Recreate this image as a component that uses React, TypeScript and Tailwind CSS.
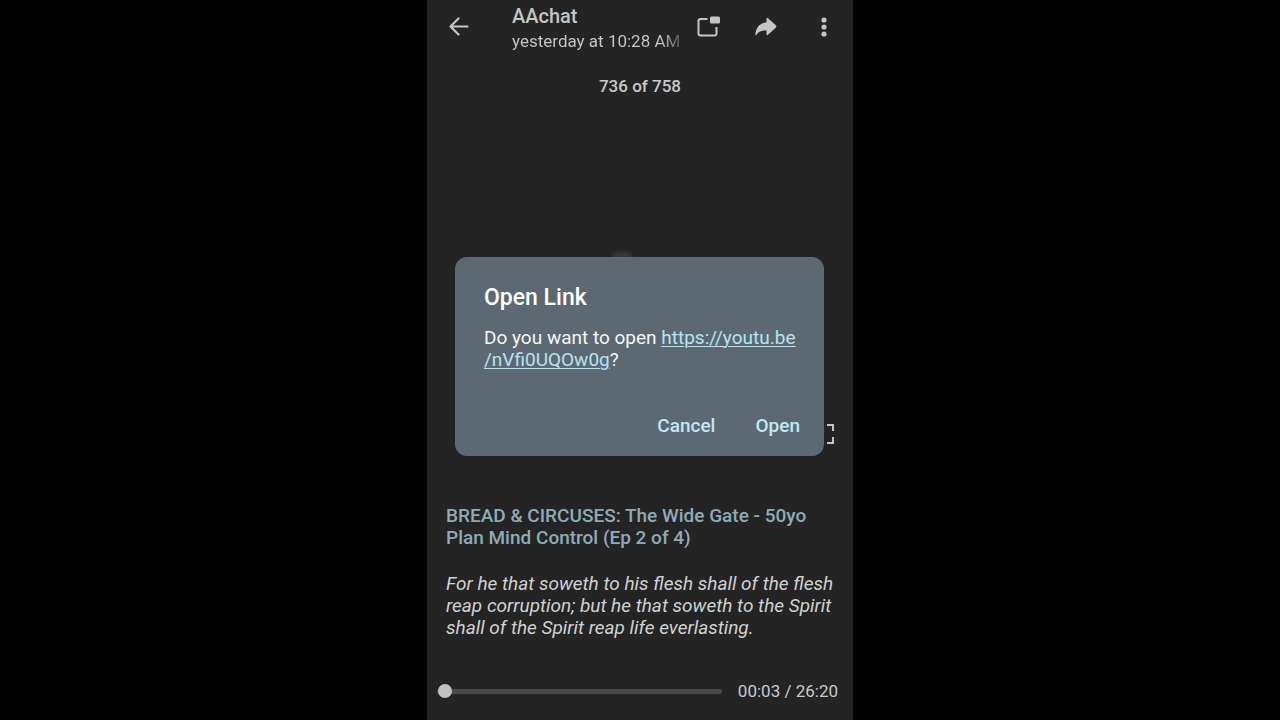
import React, { useState } from "react";

const iconButton = "flex items-center justify-center text-[#c4c6c5]";

function formatTime(seconds: number) {
  const m = String(Math.floor(seconds / 60)).padStart(2, "0");
  const s = String(seconds % 60).padStart(2, "0");
  return `${m}:${s}`;
}

function Header() {
  return (
    <header className="flex items-start pt-1 pr-[13px] pl-4">
      <button type="button" aria-label="Back" className={`${iconButton} h-[46px] w-8 shrink-0`}>
        <svg width="20" height="20" viewBox="0 0 20 20" fill="none" stroke="currentColor" strokeWidth="2.200" strokeLinecap="round" strokeLinejoin="round">
          <path d="M18.500 9.500H1.500M9.500 1.500L1.500 9.500L9.500 17.500" />
        </svg>
      </button>
      <div className="ml-[37px] shrink-0 whitespace-nowrap">
        <h1 className="text-[20px] leading-6 font-medium text-[#c4c6c5]">AAchat</h1>
        <p className="bg-linear-to-r from-[#c8cac9] from-88% to-[#555555] bg-clip-text text-[17px] leading-[26px] text-transparent">
          yesterday at 10:28 AM
        </p>
      </div>
      <div className="flex flex-1 items-center justify-between pl-3">
        <button type="button" aria-label="Picture in picture" className={`${iconButton} h-[46px] w-8`}>
          <svg width="24" height="24" viewBox="0 0 24 24" fill="none">
            <path d="M11.500 4H4.500Q2.500 4 2.500 6V18.500Q2.500 20.500 4.500 20.500H18.500Q20.500 20.500 20.500 18.500V12" stroke="currentColor" strokeWidth="2" />
            <rect x="14" y="1.500" width="10" height="7" rx="1.500" fill="currentColor" />
          </svg>
        </button>
        <button type="button" aria-label="Share" className={`${iconButton} h-[46px] w-8`}>
          <svg width="22" height="20" viewBox="0 0 22 20" fill="currentColor">
            <path d="M11.500 1.800Q11.500 0 13 1.300L20.800 8.300Q22 9.500 20.800 10.700L13 17.700Q11.500 19 11.500 17.200V13.500C7 13.200 3.800 14.400 1.300 18Q.4 19 .4 17.600C.8 10.800 4.600 6 11.500 5.300Z" />
          </svg>
        </button>
        <button type="button" aria-label="More options" className={`${iconButton} h-[46px] w-8`}>
          <svg width="6" height="20" viewBox="0 0 6 20" fill="currentColor">
            <circle cx="3" cy="3" r="2.600" />
            <circle cx="3" cy="10" r="2.600" />
            <circle cx="3" cy="17" r="2.600" />
          </svg>
        </button>
      </div>
    </header>
  );
}

function OpenLinkDialog({ onClose }: { onClose: () => void }) {
  return (
    <div className="absolute inset-0 flex items-center justify-center pr-[29px] pb-[7px] pl-7">
      <div role="dialog" aria-labelledby="dialog-title" className="w-full rounded-xl bg-[#5c6972] pt-6 pr-4 pb-4 pl-[29px]">
        <h2 id="dialog-title" className="text-[23px] leading-[34px] font-medium text-white">
          Open Link
        </h2>
        <p className="mt-3 text-[19px] leading-[22px] text-[#f4f6f7]">
          Do you want to open{" "}
          <a href="https://youtu.be/nVfi0UQOw0g" className="text-[#b5e3f2] underline decoration-1 underline-offset-2">
            https://youtu.be
            <br />
            /nVfi0UQOw0g
          </a>
          ?
        </p>
        <div className="mt-[41px] flex justify-end gap-6 text-[19px] leading-7 font-medium text-[#c2e8f5]">
          <button type="button" onClick={onClose} className="px-2">
            Cancel
          </button>
          <button type="button" onClick={onClose} className="px-2">
            Open
          </button>
        </div>
      </div>
    </div>
  );
}

export default function App() {
  const [open, setOpen] = useState(true);
  const [time, setTime] = useState(3);
  const duration = 1580;

  return (
    <div className="min-h-screen bg-black font-[Roboto,sans-serif]">
      <main className="relative mx-auto flex min-h-screen max-w-[426px] flex-col bg-[#242424]">
        <Header />
        <p className="mt-5 text-center text-[17px] leading-6 font-medium text-[#c8cac9]">736 of 758</p>

        <section className="flex flex-1 flex-col items-end justify-between px-[18px] pt-[154px] pb-[60px]">
          <div className="mr-[203px] h-4 w-5 rounded-md bg-[#3a3a3a] blur-[2px]" />
          <button type="button" aria-label="Fullscreen" className="text-[#c4c6c5]">
            <svg width="22" height="22" viewBox="0 0 22 22" fill="none" stroke="currentColor" strokeWidth="2">
              <path d="M2 8V2H8M14 2H20V8M20 14V20H14M8 20H2V14" />
            </svg>
          </button>
        </section>

        <section className="px-[19px] text-[19px] leading-[22px]">
          <h2 className="font-medium text-[#8fabb8]">
            BREAD &amp; CIRCUSES: The Wide Gate - 50yo Plan Mind Control (Ep 2 of 4)
          </h2>
          <p className="mt-6 text-[#d0d2d1] italic">
            For he that soweth to his flesh shall of the flesh reap corruption; but he that soweth to the Spirit shall of the Spirit reap life everlasting.
          </p>
        </section>

        <footer className="mt-10 flex items-center gap-4 pr-[15px] pb-[17px] pl-[10px]">
          <input
            type="range"
            aria-label="Seek"
            min={0}
            max={duration}
            value={time}
            onChange={(e) => setTime(Number(e.target.value))}
            className="h-[5px] min-w-0 flex-1 appearance-none rounded-full bg-[#4a4a4a] [&::-webkit-slider-thumb]:size-[14px] [&::-webkit-slider-thumb]:appearance-none [&::-webkit-slider-thumb]:rounded-full [&::-webkit-slider-thumb]:bg-[#c0c2c0]"
          />
          <span className="text-[17px] leading-6 text-[#c8cac9]">
            {formatTime(time)} / {formatTime(duration)}
          </span>
        </footer>

        {open && <OpenLinkDialog onClose={() => setOpen(false)} />}
      </main>
    </div>
  );
}
